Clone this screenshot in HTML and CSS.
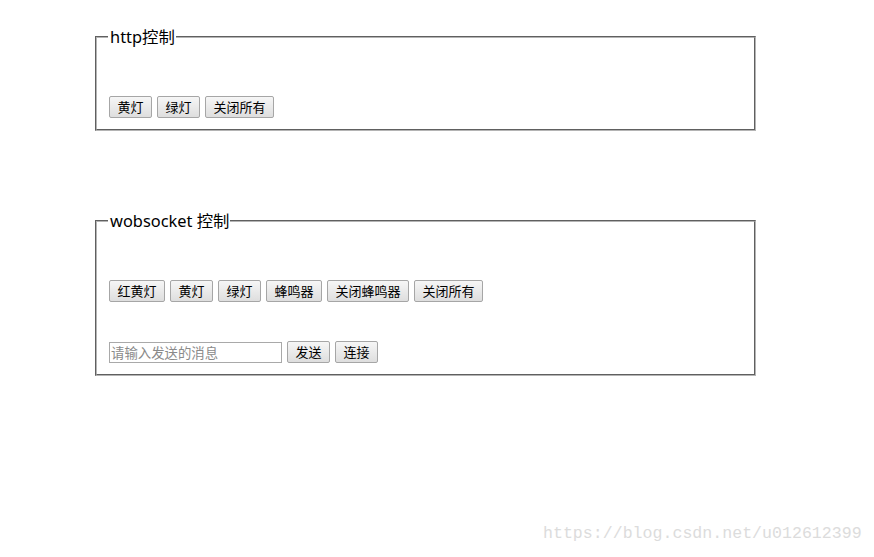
FILE: index.html
```html
<!DOCTYPE html>
<html lang="zh-CN">
<head>
  <meta charset="UTF-8" />
  <title>控制</title>
  <link rel="stylesheet" href="styles.css">
</head>
<body>
  <main class="page">
    <fieldset class="panel panel-http">
      <legend>http控制</legend>
      <div class="row">
        <button class="btn">黄灯</button>
        <button class="btn">绿灯</button>
        <button class="btn">关闭所有</button>
      </div>
    </fieldset>

    <fieldset class="panel panel-ws">
      <legend>wobsocket 控制</legend>
      <div class="row">
        <button class="btn">红黄灯</button>
        <button class="btn">黄灯</button>
        <button class="btn">绿灯</button>
        <button class="btn">蜂鸣器</button>
        <button class="btn">关闭蜂鸣器</button>
        <button class="btn">关闭所有</button>
      </div>
      <div class="row row-send">
        <input type="text" class="msg" placeholder="请输入发送的消息">
        <button class="btn">发送</button>
        <button class="btn">连接</button>
      </div>
    </fieldset>
  </main>

  <div class="watermark">https://blog.csdn.net/u012612399</div>
</body>
</html>
```

FILE: styles.css
```css
* { box-sizing: border-box; }

body {
  margin: 0;
  height: 557px;
  background: #ffffff;
  color: #000;
  font-family: "Noto Sans", "Noto Sans CJK SC", sans-serif;
  position: relative;
}

.page {
  padding: 29px 0 0 95px;
}

.panel {
  width: 661px;
  margin: 0;
  padding: 0 0 11px 12px;
  border: 2px groove #b4b4b4;
}

.panel legend {
  font-size: 16.4px;
  line-height: 16px;
  padding: 0 1px 0 2px;
  margin-left: -1px;
  height: 16px;
}

.panel-ws {
  margin-top: 82px;
}

.row {
  display: flex;
  gap: 5px;
  align-items: center;
}

.panel-http .row,
.panel-ws .row {
  margin-top: 51px;
}

.panel-ws .row-send {
  margin-top: 39px;
}

.btn {
  height: 22px;
  padding: 0 7.5px;
  font-family: "Noto Sans CJK SC", sans-serif;
  font-size: 13px;
  line-height: 20px;
  color: #000;
  background: linear-gradient(#f6f6f6, #dedede);
  border: 1px solid #a6a6a6;
  border-radius: 2px;
}

.msg {
  width: 173px;
  height: 21px;
  padding: 0 1px;
  font-family: "Noto Sans CJK SC", sans-serif;
  font-size: 13.4px;
  border: 1px solid #a9a9a9;
  border-radius: 0;
}

.msg::placeholder {
  color: #8a8a8a;
}

.watermark {
  position: absolute;
  left: 543px;
  top: 524px;
  font-family: "Liberation Mono", monospace;
  font-size: 16.6px;
  color: #dcdcdc;
}
```
